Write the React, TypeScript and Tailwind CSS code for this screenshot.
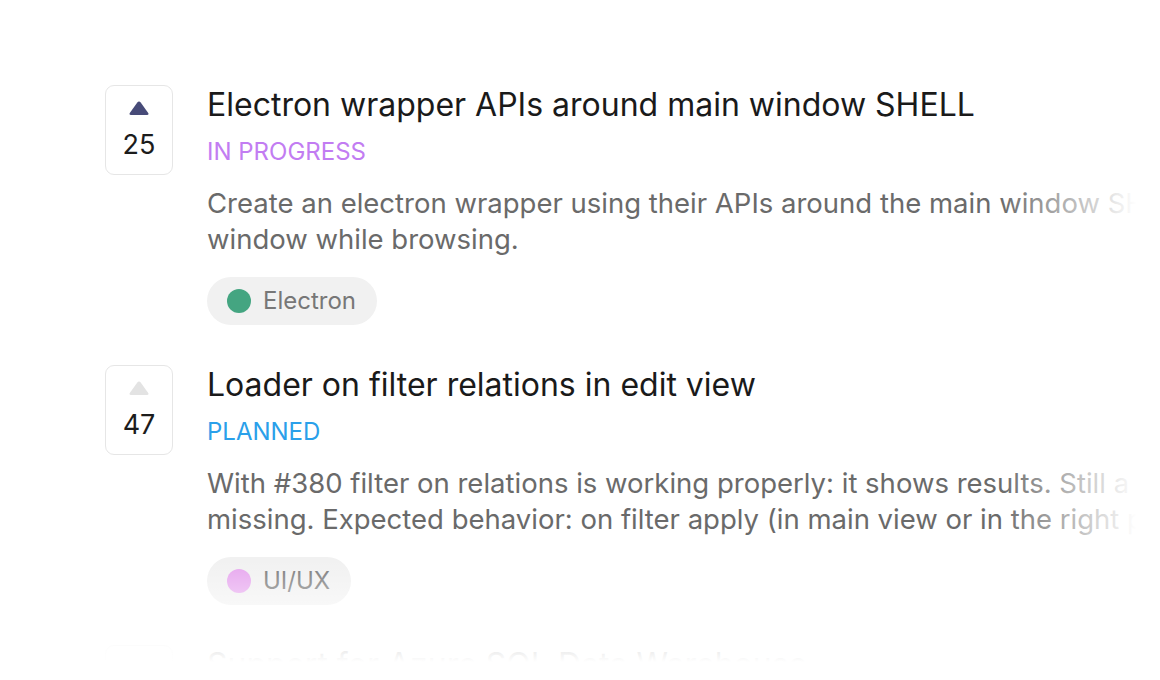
import React from "react";

type Item = {
  votes: number;
  active: boolean;
  title: string;
  status: string;
  statusClass: string;
  desc: [string, string];
  tag: string;
  dotClass: string;
};

const items: Item[] = [
  {
    votes: 25,
    active: true,
    title: "Electron wrapper APIs around main window SHELL",
    status: "IN PROGRESS",
    statusClass: "text-[#c27cf2]",
    desc: [
      "Create an electron wrapper using their APIs around the main window SHELL to keep the",
      "window while browsing.",
    ],
    tag: "Electron",
    dotClass: "bg-[#44a581]",
  },
  {
    votes: 47,
    active: false,
    title: "Loader on filter relations in edit view",
    status: "PLANNED",
    statusClass: "text-[#2aa0ea]",
    desc: [
      "With #380 filter on relations is working properly: it shows results. Still a loader is",
      "missing. Expected behavior: on filter apply (in main view or in the right panel) show loader.",
    ],
    tag: "UI/UX",
    dotClass: "bg-[#e6a4ee]",
  },
  {
    votes: 12,
    active: false,
    title: "Support for Azure SQL Data Warehouse",
    status: "PLANNED",
    statusClass: "text-[#2aa0ea]",
    desc: ["Add a connector for Azure SQL Data Warehouse.", ""],
    tag: "Database",
    dotClass: "bg-[#f0b35a]",
  },
];

function Row({ it }: { it: Item }) {
  return (
    <div className="flex gap-[34px]">
      <div className="w-[68px] h-[90px] shrink-0 rounded-[9px] border-[1.5px] border-[#e6e6e6] flex flex-col items-center">
        <svg width="22" height="15" viewBox="0 0 22 15" className="mt-[15px]">
          <path
            d="M9.3 1.6 Q11 -0.4 12.7 1.6 L20.2 12 Q21.2 14 19 14 L3 14 Q0.8 14 1.8 12 Z"
            fill={it.active ? "#474b78" : "#e3e3e3"}
          />
        </svg>
        <div className="mt-[14px] text-[27px] leading-[30px] text-[#1c1c1c]">{it.votes}</div>
      </div>
      <div className="flex-1 min-w-0">
        <div className="text-[32px] leading-[38px] pt-[1px] text-[#1a1a1a] whitespace-nowrap">{it.title}</div>
        <div className={`mt-[13px] text-[24px] leading-[30px] ${it.statusClass}`}>{it.status}</div>
        <div className="mt-[18px] text-[27.5px] leading-[36px] text-[#6a6a6a] whitespace-nowrap">
          <div>{it.desc[0]}</div>
          <div>{it.desc[1]}</div>
        </div>
        <div className="mt-5 inline-flex items-center h-[48px] pl-5 pr-[21px] rounded-full bg-[#f1f1f1]">
          <span className={`w-[24px] h-[24px] rounded-full ${it.dotClass}`} />
          <span className="ml-[12px] text-[24px] text-[#777777]">{it.tag}</span>
        </div>
      </div>
    </div>
  );
}

export default function App() {
  return (
    <div
      className="relative w-[1160px] h-[680px] overflow-hidden bg-white"
      style={{ fontFamily: "Inter, 'Noto Sans', sans-serif" }}
    >
      <div className="pl-[105px] pt-[85px] flex flex-col gap-[40px]">
        {items.map((it, i) => (
          <Row key={i} it={it} />
        ))}
      </div>
      <div className="pointer-events-none absolute top-0 right-0 h-full w-[160px] bg-gradient-to-r from-white/0 to-white to-[85%]" />
      <div className="pointer-events-none absolute left-0 bottom-0 w-full h-[120px] bg-gradient-to-b from-white/0 via-white/75 via-[55%] to-white to-[85%]" />
    </div>
  );
}
